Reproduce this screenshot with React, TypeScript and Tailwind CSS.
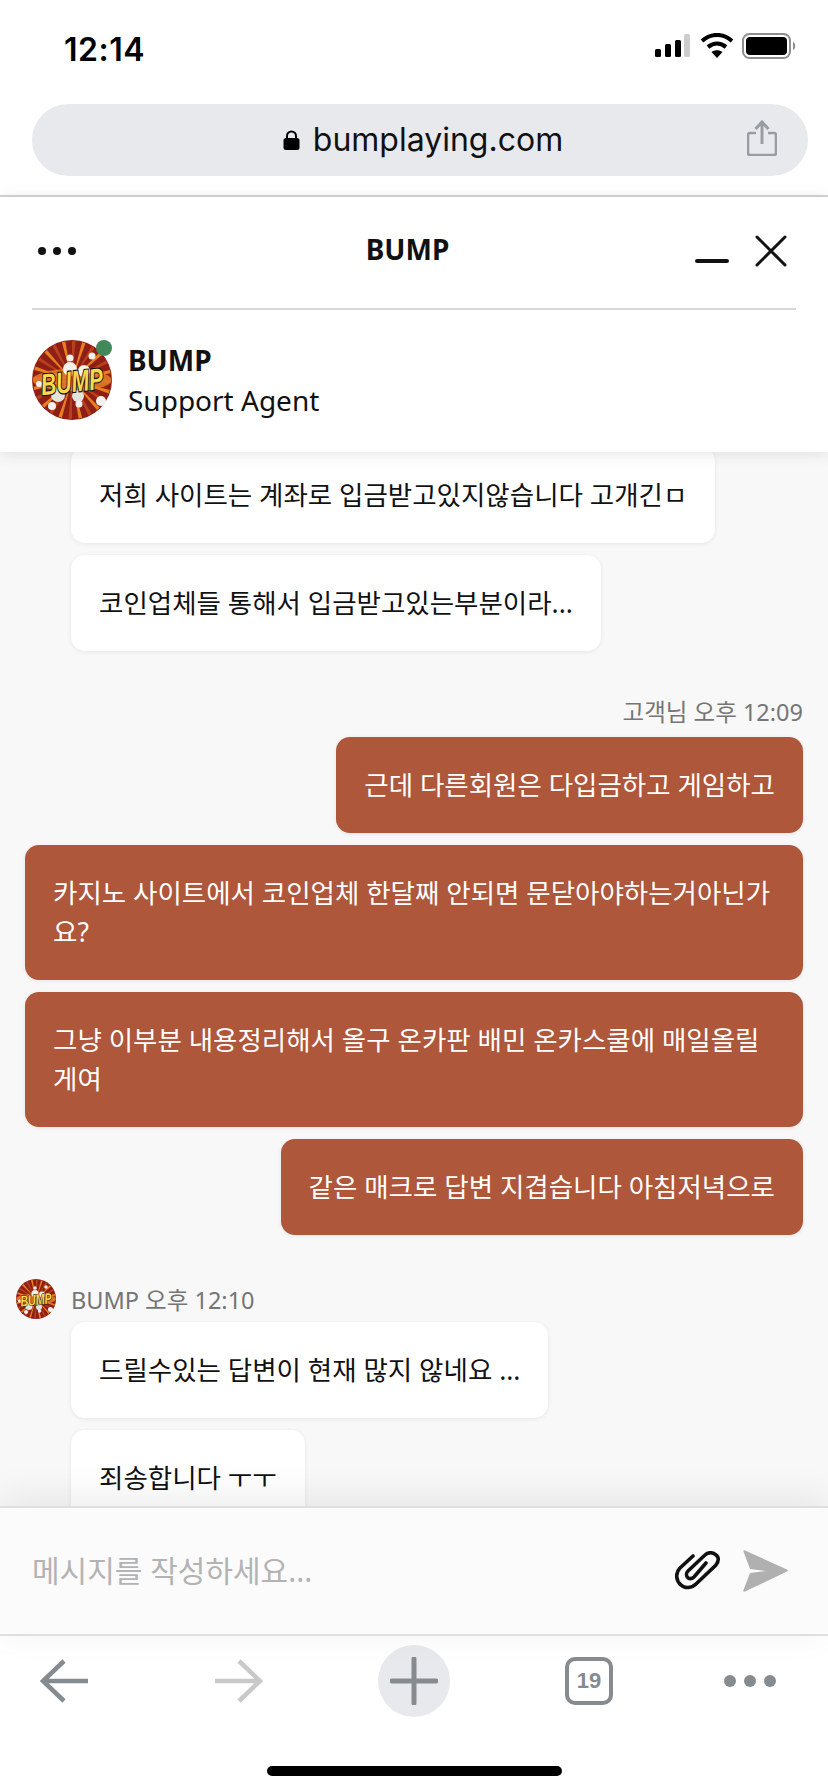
import React from "react";

const KR = "font-['Noto_Sans','Noto_Sans_CJK_KR',sans-serif]";

const rays = Array.from({ length: 24 }, (_, i) => (i * 15 * Math.PI) / 180);

function BumpLogo({ className }: { className: string }) {
  return (
    <svg viewBox="0 0 80 80" className={className}>
      <circle cx="40" cy="40" r="40" fill="#8f1f16" />
      {rays.map((a, i) => (
        <path
          key={i}
          d={`M40 40 L${40 + 39 * Math.cos(a)} ${40 + 39 * Math.sin(a)} L${40 + 39 * Math.cos(a + 0.09)} ${40 + 39 * Math.sin(a + 0.09)} Z`}
          fill={i % 2 ? "#e8801f" : "#b8401a"}
        />
      ))}
      <ellipse cx="40" cy="40" rx="39.5" ry="11" fill="#e8862a" opacity="0.8" />
      <circle cx="38" cy="29" r="7" fill="#f4f1ec" />
      <circle cx="52" cy="31" r="6" fill="#f4f1ec" />
      <circle cx="26" cy="55" r="7" fill="#e6e2dc" />
      <circle cx="46" cy="56" r="6" fill="#e6e2dc" />
      <circle cx="38" cy="18" r="3.5" fill="#f4f1ec" />
      <circle cx="60" cy="16" r="3.5" fill="#f4f1ec" />
      <circle cx="20" cy="66" r="4" fill="#f4f1ec" />
      <circle cx="47" cy="64" r="3.5" fill="#f4f1ec" />
      <circle cx="69" cy="61" r="5" fill="#f4f1ec" />
      <circle cx="7" cy="44" r="3" fill="#f4f1ec" />
      <text
        textAnchor="middle"
        fontFamily="'Liberation Sans', sans-serif"
        fontWeight="700"
        fontStyle="italic"
        fontSize="24"
        fill="#f9d84c"
        stroke="#111"
        strokeWidth="1.8"
        paintOrder="stroke"
        transform="translate(41 52) rotate(-6) scale(0.88 1.25)"
      >
        BUMP
      </text>
    </svg>
  );
}

function StatusIcons() {
  return (
    <div className="flex items-center">
      <svg width="36" height="24" viewBox="0 0 36 24" className="mr-[10px]">
        <rect x="1" y="15" width="6" height="8" rx="1.5" fill="#000" />
        <rect x="11" y="10" width="6" height="13" rx="1.5" fill="#000" />
        <rect x="21" y="6" width="6" height="17" rx="1.5" fill="#000" />
        <rect x="30" y="0" width="6" height="23" rx="1.5" fill="#cdcdcd" />
      </svg>
      <svg width="34" height="26" viewBox="0 0 34 26" className="mr-[8px]">
        <path d="M2 8 C11 0 23 0 32 8" fill="none" stroke="#000" strokeWidth="4.2" />
        <path d="M8 14 C13.5 9.5 20.5 9.5 26 14" fill="none" stroke="#000" strokeWidth="4.2" />
        <path d="M11.5 19 L17 25 L22.5 19 C19 16.5 15 16.5 11.5 19 Z" fill="#000" />
      </svg>
      <svg width="56" height="26" viewBox="0 0 56 26">
        <rect x="1" y="1" width="47" height="24" rx="6.5" fill="none" stroke="#8e8e8e" strokeWidth="2" />
        <rect x="4" y="4" width="41" height="18" rx="4" fill="#000" />
        <path d="M51 9 C54 10 54 16 51 17 Z" fill="#8e8e8e" />
      </svg>
    </div>
  );
}

function AddressBar() {
  return (
    <div className="relative ml-[32px] mr-[20px] flex h-[72px] items-center justify-center rounded-[36px] bg-[#e8e9ed] pl-[6px]">
      <svg width="17" height="20" viewBox="0 0 17 20" className="mr-[13px]">
        <path d="M4 9 V6 a4.5 4.5 0 0 1 9 0 V9" fill="none" stroke="#000" strokeWidth="2" />
        <rect x="0.5" y="8" width="16" height="12" rx="2.5" fill="#000" />
      </svg>
      <span className="font-['Inter',sans-serif] text-[32px] leading-none text-[#111]">bumplaying.com</span>
      <svg width="30" height="36" viewBox="0 0 30 36" className="absolute right-[31px] top-[16px]">
        <path d="M9 13 H3 a2 2 0 0 0 -2 2 V33 a2 2 0 0 0 2 2 H27 a2 2 0 0 0 2 -2 V15 a2 2 0 0 0 -2 -2 H21" fill="none" stroke="#989da2" strokeWidth="2.6" />
        <path d="M15 24 V3 M8.5 9 L15 2 L21.5 9" fill="none" stroke="#989da2" strokeWidth="3" />
      </svg>
    </div>
  );
}

function ChatHeader() {
  return (
    <div className={`relative z-10 h-[255px] bg-white shadow-[0_2px_14px_rgba(0,0,0,0.10)] ${KR}`}>
      <div className="relative mx-[32px] flex h-[113px] items-center justify-center border-b-2 border-[#d8d8d8]">
        <div className="absolute left-[6px] top-[50px] flex gap-[7px]">
          <span className="h-[8px] w-[8px] rounded-full bg-[#111]" />
          <span className="h-[8px] w-[8px] rounded-full bg-[#111]" />
          <span className="h-[8px] w-[8px] rounded-full bg-[#111]" />
        </div>
        <span className="-mt-[7px] ml-[-13px] text-[28px] font-bold leading-none text-[#111]">BUMP</span>
        <div className="absolute right-[67px] top-[62px] h-[4px] w-[34px] rounded-full bg-[#111]" />
        <svg width="32" height="32" viewBox="0 0 32 32" className="absolute right-[9px] top-[38px]">
          <path d="M2 2 L30 30 M30 2 L2 30" stroke="#111" strokeWidth="3" strokeLinecap="round" />
        </svg>
      </div>
      <div className="mt-[30px] flex items-center px-[32px]">
        <div className="relative h-[80px] w-[80px]">
          <BumpLogo className="h-[80px] w-[80px]" />
          <span className="absolute right-0 top-0 h-[16px] w-[16px] rounded-full bg-[#43885a]" />
        </div>
        <div className="ml-[16px] flex flex-col">
          <span className="text-[28px] font-bold leading-[40px] text-[#111]">BUMP</span>
          <span className="text-[28px] leading-[40px] text-[#111]">Support Agent</span>
        </div>
      </div>
    </div>
  );
}

function AgentBubble({ text }: { text: string }) {
  return (
    <div className="w-fit rounded-[14px] bg-white px-[28px] py-[28.5px] text-[26.5px] leading-[39px] text-[#111] shadow-[0_1px_4px_rgba(0,0,0,0.08)]">
      {text}
    </div>
  );
}

function UserBubble({ text }: { text: string }) {
  return (
    <div className="w-fit max-w-[778px] rounded-[14px] bg-[#ae573b] px-[28px] py-[28.5px] text-[26.5px] leading-[39px] text-white shadow-[0_1px_4px_rgba(0,0,0,0.08)]">
      {text}
    </div>
  );
}

function Messages() {
  return (
    <div className={`min-h-0 flex-1 overflow-hidden bg-[#f8f8f8] ${KR}`}>
      <div className="-mt-[5px] flex flex-col gap-[12px] pl-[71px]">
        <AgentBubble text="저희 사이트는 계좌로 입금받고있지않습니다 고개긴ㅁ" />
        <AgentBubble text="코인업체들 통해서 입금받고있는부분이라..." />
      </div>
      <div className="mt-[46px] flex flex-col items-end gap-[12px] pr-[25px]">
        <div className="-mb-[2px] text-[23.5px] leading-[30px] text-[#757575]">고객님 오후 12:09</div>
        <UserBubble text="근데 다른회원은 다입금하고 게임하고" />
        <UserBubble text="카지노 사이트에서 코인업체 한달째 안되면 문닫아야하는거아닌가요?" />
        <UserBubble text="그냥 이부분 내용정리해서 올구 온카판 배민 온카스쿨에 매일올릴게여" />
        <UserBubble text="같은 매크로 답변 지겹습니다 아침저녁으로" />
      </div>
      <div className="mt-[44px] flex items-center pl-[16px]">
        <BumpLogo className="h-[40px] w-[40px]" />
        <span className="ml-[15px] mt-[2px] text-[23.5px] leading-[30px] text-[#757575]">BUMP 오후 12:10</span>
      </div>
      <div className="mt-[3px] flex flex-col gap-[12px] pl-[71px]">
        <AgentBubble text="드릴수있는 답변이 현재 많지 않네요 ..." />
        <AgentBubble text="죄송합니다 ㅜㅜ" />
      </div>
    </div>
  );
}

function Composer() {
  return (
    <div className={`relative z-10 flex h-[130px] flex-none items-center border-y-2 border-[#dfdfdf] bg-[#fbfbfb] pl-[32px] pr-[40px] shadow-[0_-8px_36px_rgba(0,0,0,0.08)] ${KR}`}>
      <span className="flex-1 text-[30px] leading-none text-[#b3b3b3]">메시지를 작성하세요...</span>
      <svg width="46" height="40" viewBox="0 0 46 40" className="mr-[21px]">
        <path
          d="M18 5 L5 17 C0 22 1 30 6 34 C10 38 17 37 21 33 L41 14 C44 10 44 6 41 4 C38 1 33 1 30 4 L13 20 C11 22 11 25 13 27 C15 28 17 28 19 26 L31 12"
          fill="none"
          stroke="#111"
          strokeWidth="3.6"
          strokeLinecap="round"
        />
      </svg>
      <svg width="46" height="42" viewBox="0 0 46 42">
        <path d="M1.5 1.5 C1 0 2 0 3 0.5 L45 19.5 C46.2 20 46.2 21 45 21.5 L3 41.5 C1.5 42 1 41 1.5 40 L8 23 L24 21 L8 19 Z" fill="#b0b0b0" />
      </svg>
    </div>
  );
}

function BrowserToolbar() {
  return (
    <div className="relative h-[156px] flex-none bg-white">
      <div className="flex h-[90px] items-center pl-[40px]">
        <svg width="48" height="44" viewBox="0 0 48 44">
          <path d="M24 2 L3 22 L24 42 M3 22 H48" fill="none" stroke="#868b90" strokeWidth="4.5" />
        </svg>
        <svg width="48" height="44" viewBox="0 0 48 44" className="ml-[127px]">
          <path d="M24 2 L45 22 L24 42 M45 22 H0" fill="none" stroke="#c9c9c9" strokeWidth="4.5" />
        </svg>
        <div className="ml-[115px] flex h-[72px] w-[72px] items-center justify-center rounded-full bg-[#e8e9ed]">
          <svg width="48" height="48" viewBox="0 0 48 48">
            <path d="M24 2 V46 M2 24 H46" stroke="#868b90" strokeWidth="5" strokeLinecap="round" />
          </svg>
        </div>
        <div className="ml-[115px] flex h-[48px] w-[48px] items-center justify-center rounded-[10px] border-[4px] border-[#868b90] font-['Liberation_Sans',sans-serif] text-[22px] font-bold leading-none text-[#868b90]">
          19
        </div>
        <div className="ml-[111px] flex gap-[8px]">
          <span className="h-[12px] w-[12px] rounded-full bg-[#868b90]" />
          <span className="h-[12px] w-[12px] rounded-full bg-[#868b90]" />
          <span className="h-[12px] w-[12px] rounded-full bg-[#868b90]" />
        </div>
      </div>
      <div className="absolute bottom-[16px] left-[267px] h-[10px] w-[295px] rounded-full bg-black" />
    </div>
  );
}

export default function App() {
  return (
    <div className="flex h-[1792px] w-[828px] flex-col overflow-hidden bg-white">
      <div className="h-[197px] flex-none border-b-2 border-[#d4d4d4]">
        <div className="flex h-[104px] items-start justify-between pl-[64px] pr-[30px] pt-[33px]">
          <span className="font-['Inter',sans-serif] text-[32px] font-semibold leading-[34px] tracking-[0.5px] text-black">12:14</span>
          <StatusIcons />
        </div>
        <AddressBar />
      </div>
      <ChatHeader />
      <Messages />
      <Composer />
      <BrowserToolbar />
    </div>
  );
}
